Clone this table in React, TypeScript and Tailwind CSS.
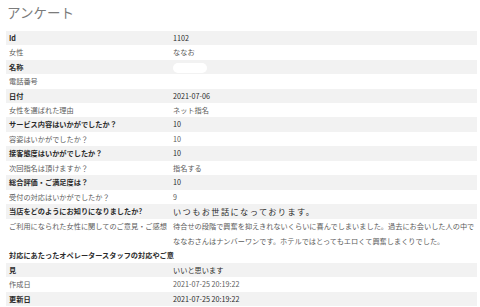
import React from "react";

type Row = { label: string; value?: React.ReactNode; strong: boolean };

const rows: Row[] = [
  { label: "Id", value: "1102", strong: true },
  { label: "女性", value: "ななお", strong: false },
  { label: "名称", value: <span className="inline-block w-[34px] h-[10px] rounded-full bg-white align-middle" />, strong: true },
  { label: "電話番号", value: <span className="inline-block w-[40px] h-[6px] rounded-t-full bg-white align-bottom" />, strong: false },
  { label: "日付", value: "2021-07-06", strong: true },
  { label: "女性を選ばれた理由", value: "ネット指名", strong: false },
  { label: "サービス内容はいかがでしたか？", value: "10", strong: true },
  { label: "容姿はいかがでしたか？", value: "10", strong: false },
  { label: "接客態度はいかがでしたか？", value: "10", strong: true },
  { label: "次回指名は頂けますか？", value: "指名する", strong: false },
  { label: "総合評価・ご満足度は？", value: "10", strong: true },
  { label: "受付の対応はいかがでしたか？", value: "9", strong: false },
  {
    label: "当店をどのようにお知りになりましたか?",
    value: <span className="text-[8.2px] tracking-[1.4px]">いつもお世話になっております。</span>,
    strong: true,
  },
  {
    label: "ご利用になられた女性に関してのご意見・ご感想",
    value: "待合せの段階で興奮を抑えきれないくらいに喜んでしまいました。過去にお会いした人の中でななおさんはナンバーワンです。ホテルではとってもエロくて興奮しまくりでした。",
    strong: false,
  },
];

const tail: Row[] = [
  { label: "作成日", value: "2021-07-25 20:19:22", strong: false },
  { label: "更新日", value: "2021-07-25 20:19:22", strong: true },
];

function Line({ r }: { r: Row }) {
  return (
    <div
      className={
        "grid grid-cols-[166px_1fr] " +
        (r.strong ? "bg-[#f2f2f2] text-[#2a2a2a]" : "bg-white text-[#5c5c5c]")
      }
    >
      <div className={"pl-[3px] whitespace-nowrap " + (r.strong ? "font-bold" : "font-normal")}>{r.label}</div>
      <div className="pl-[1px]">{r.value}</div>
    </div>
  );
}

export default function App() {
  return (
    <div
      className="w-[480px] h-[307px] bg-white overflow-hidden pl-[6px] pr-[3px]"
      style={{ fontFamily: '"Noto Sans CJK JP", "Noto Sans", sans-serif' }}
    >
      <h1 className="pt-[3px] pl-[1px] text-[13.5px] leading-[18px] text-[#7b7b7b] font-normal mb-[9.8px]">アンケート</h1>
      <div className="text-[7.2px] leading-[14.44px]">
        {rows.map((r) => (
          <Line key={r.label} r={r} />
        ))}
        <div className="bg-white text-[#2a2a2a] font-bold pl-[3px] whitespace-nowrap">
          対応にあたったオペレータースタッフの対応やご意
        </div>
        <div className="grid grid-cols-[166px_1fr] bg-[#f2f2f2] text-[#2a2a2a]">
          <div className="pl-[3px] font-bold">見</div>
          <div className="pl-[1px]">いいと思います</div>
        </div>
        {tail.map((r) => (
          <Line key={r.label} r={r} />
        ))}
      </div>
    </div>
  );
}
